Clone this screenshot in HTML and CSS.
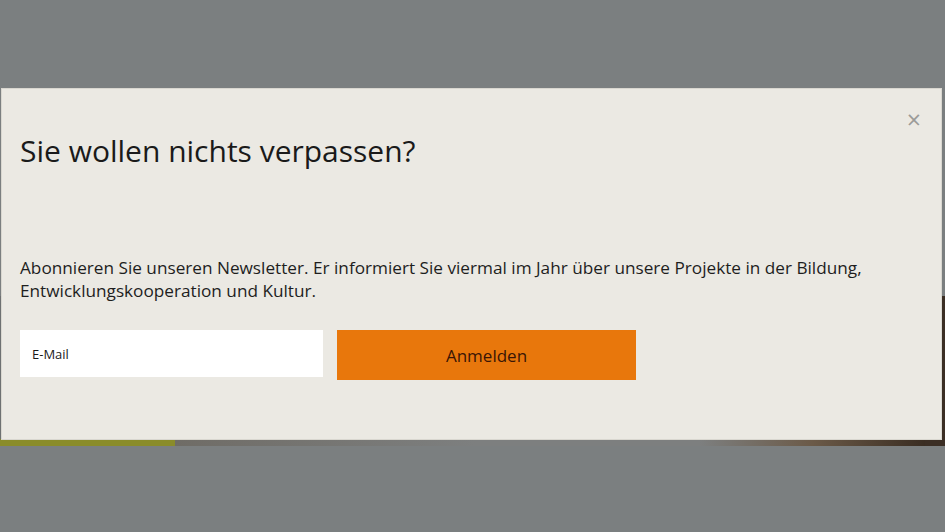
FILE: index.html
```html
<!DOCTYPE html>
<html>
<head>
<link rel="stylesheet" href="styles.css">
</head>
<body>

<div class="page">
  <div class="hero">
    <div class="hero-green"></div>
    <div class="hero-mid"></div>
    <div class="hero-dark"></div>
  </div>
</div>

<div id="popup" class="popup">
  <span class="close" onclick="closePopup()">&times;</span>
  <h3 class="title">Sie wollen nichts verpassen?</h3>
  <p class="text">Abonnieren Sie unseren Newsletter. Er informiert Sie viermal im Jahr über unsere Projekte in der Bildung, Entwicklungskooperation und Kultur.</p>

  <form class="signup" onsubmit="return false;">
    <input type="text" class="email" placeholder="E-Mail">
    <button class="submit">Anmelden</button>
  </form>
</div>

<script>
function closePopup() {
  document.getElementById("popup").style.display = "none";
}
</script>

</body>
</html>
```

FILE: styles.css
```css
body {
  margin: 0;
  background-color: #7b7f80;
  font-family: "Open Sans", "Noto Sans", sans-serif;
}

.page {
  height: 532px;
  padding-top: 296px;
  box-sizing: border-box;
}

.hero {
  display: flex;
  height: 150px;
}

/* only the bottom edge of the hero shows under the popup */
.hero-green {
  width: 175px;
  background: linear-gradient(#6e7172 0, #6e7172 143px, #8a8c2a 143px);
}

.hero-mid {
  flex: 1;
  background: linear-gradient(90deg, #6f6c66 0%, #7d7f7f 40%, #7d7f7f 70%, #6b5a48 85%, #3a2d22 100%);
}

.hero-dark {
  width: 20px;
  background: #3b2e24;
}

.popup {
  position: absolute;
  top: 88px;
  left: 1px;
  width: 941px;
  height: 352px;
  box-sizing: border-box;
  padding: 0 18px;
  background-color: #ebe9e3;
  border: 1px solid #d9d7d0;
}

.close {
  position: absolute;
  top: 18px;
  right: 20px;
  color: #9b9b99;
  font-size: 25px;
  line-height: 24px;
  cursor: pointer;
}

.title {
  margin: 42px 0 0;
  font-size: 30px;
  font-weight: normal;
  line-height: 40px;
  color: #1a1a1a;
}

.text {
  margin: 85px 0 0;
  font-size: 17.2px;
  line-height: 23px;
  color: #1e1e1e;
}

.signup {
  display: flex;
  align-items: flex-start;
  gap: 14px;
  margin-top: 28px;
}

.email {
  width: 303px;
  height: 47px;
  box-sizing: border-box;
  padding: 0 12px;
  border: none;
  background: #fff;
  font-family: inherit;
  font-size: 13px;
}

.email::placeholder {
  color: #1a1a1a;
}

.submit {
  width: 299px;
  height: 50px;
  border: none;
  background-color: #e8770c;
  color: #3a1505;
  font-family: inherit;
  font-size: 17px;
}
```
